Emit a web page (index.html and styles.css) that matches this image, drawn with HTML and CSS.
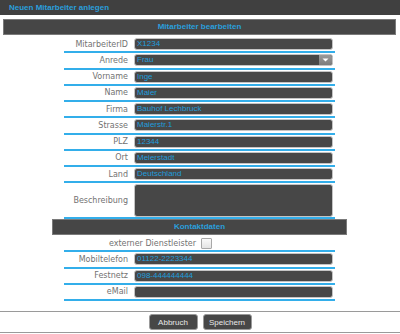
FILE: index.html
```html
<!DOCTYPE html>
<html>
<head>
<meta charset="utf-8">
<link rel="stylesheet" href="styles.css">
</head>
<body>
<div class="titlebar">Neuen Mitarbeiter anlegen</div>
<div class="section-head wide">Mitarbeiter bearbeiten</div>
<div class="rows first">
  <div class="row"><span class="label">MitarbeiterID</span><span class="field">X1234</span></div>
  <div class="row"><span class="label">Anrede</span><span class="field select">Frau<span class="arrow"><svg width="7" height="4" viewBox="0 0 7 4"><path d="M0.5 0.5H6.5L3.5 3.5Z" fill="#fff"/></svg></span></span></div>
  <div class="row"><span class="label">Vorname</span><span class="field">Inge</span></div>
  <div class="row"><span class="label">Name</span><span class="field">Maier</span></div>
  <div class="row"><span class="label">Firma</span><span class="field">Bauhof Lechbruck</span></div>
  <div class="row"><span class="label">Strasse</span><span class="field">Maierstr.1</span></div>
  <div class="row"><span class="label">PLZ</span><span class="field">12344</span></div>
  <div class="row"><span class="label">Ort</span><span class="field">Meierstadt</span></div>
  <div class="row"><span class="label">Land</span><span class="field">Deutschland</span></div>
  <div class="row tall"><span class="label">Beschreibung</span><span class="field area"></span></div>
</div>
<div class="section-head narrow">Kontaktdaten</div>
<div class="rows second">
  <div class="row"><span class="label long">externer Dienstleister</span><span class="checkbox"></span></div>
  <div class="row"><span class="label">Mobiltelefon</span><span class="field">01122-2223344</span></div>
  <div class="row"><span class="label">Festnetz</span><span class="field">098-444444444</span></div>
  <div class="row"><span class="label">eMail</span><span class="field"></span></div>
</div>
<div class="footer">
  <button class="btn">Abbruch</button>
  <button class="btn">Speichern</button>
</div>
</body>
</html>
```
FILE: styles.css
```css
html, body {
  margin: 0;
  padding: 0;
  background: #fff;
  width: 400px;
  height: 334px;
  overflow: hidden;
  font-family: "Liberation Sans", Arial, sans-serif;
}
.titlebar {
  height: 15px;
  line-height: 15px;
  background: #404040;
  color: #2a9fdc;
  font-weight: bold;
  font-size: 8px;
  padding-left: 9px;
}
.section-head {
  box-sizing: border-box;
  height: 16px;
  line-height: 14px;
  background: #464646;
  border: 1px solid #7a7a7a;
  color: #2a9fdc;
  font-weight: bold;
  font-size: 8px;
  text-align: center;
}
.section-head.wide {
  margin: 4px 4px 0 3px;
}
.section-head.narrow {
  margin-left: 52px;
  width: 295px;
}
.rows {
  margin-left: 64px;
  width: 271px;
}
.rows.first {
  margin-top: 2px;
}
.rows.second {
  margin-top: 1px;
}
.row {
  box-sizing: border-box;
  height: 16.25px;
  border-bottom: 2px solid #33aeea;
  display: flex;
  align-items: center;
}
.row.tall {
  height: 35.75px;
}
.label {
  width: 64px;
  flex: none;
  text-align: right;
  font-family: "DejaVu Sans", Verdana, sans-serif;
  font-size: 8px;
  color: #727272;
  margin-right: 6px;
}
.label.long {
  width: 132px;
  margin-right: 5px;
}
.field {
  box-sizing: border-box;
  position: relative;
  width: 199px;
  height: 12px;
  background: #474747;
  border: 1px solid #c4c4c4;
  border-radius: 3px;
  color: #1f9ddc;
  font-size: 8px;
  line-height: 10px;
  padding-left: 2px;
  white-space: nowrap;
}
.field.area {
  height: 33px;
}
.select .arrow {
  position: absolute;
  right: 0;
  top: 0;
  bottom: 0;
  width: 13px;
  background: linear-gradient(#9a9a9a, #7c7c7c);
  border-radius: 0 2px 2px 0;
  display: flex;
  align-items: center;
  justify-content: center;
}
.checkbox {
  box-sizing: border-box;
  width: 11px;
  height: 11px;
  background: linear-gradient(#fafafa, #e4e4e4);
  border: 1px solid #a8a8a8;
  border-radius: 1px;
}
.footer {
  margin-top: 10px;
  border-top: 1px solid #9a9a9a;
  border-bottom: 1px solid #9a9a9a;
  padding: 2px 0;
  display: flex;
  justify-content: center;
  gap: 5px;
}
.btn {
  box-sizing: border-box;
  width: 49px;
  height: 16px;
  margin: 0;
  padding: 0;
  background: #474747;
  border: 1px solid #9a9a9a;
  border-radius: 3px;
  color: #e8e8e8;
  font-family: "Liberation Sans", Arial, sans-serif;
  font-size: 8px;
}
```
